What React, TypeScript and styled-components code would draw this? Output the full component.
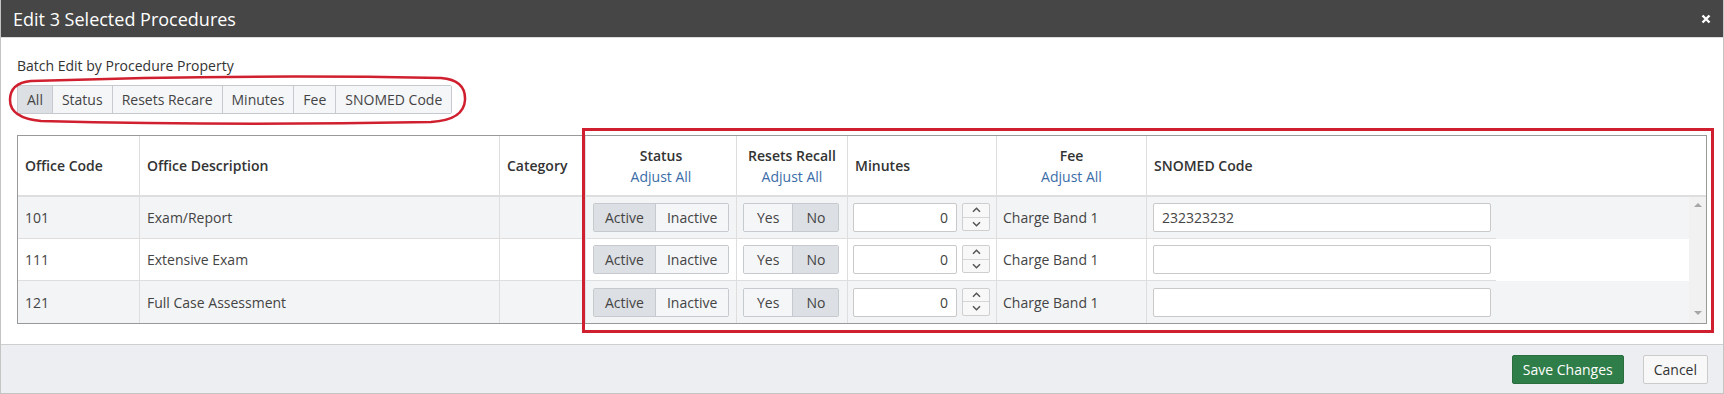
import React from 'react';
import styled, { createGlobalStyle } from 'styled-components';

const GlobalStyle = createGlobalStyle`
	html, body {
		margin: 0;
		padding: 0;
		background: #fff;
	}
	body {
		font-family: 'Open Sans', 'Noto Sans', Arial, sans-serif;
		font-size: 14px;
		color: #333;
	}
	* {
		box-sizing: border-box;
	}
`;

const Modal = styled.div`
	width: 1724px;
	height: 394px;
	display: flex;
	flex-direction: column;
	border-left: 1px solid #c4c4c4;
	border-right: 1px solid #c4c4c4;
	border-bottom: 1px solid #c4c4c4;
`;

const Header = styled.div`
	height: 38px;
	flex: none;
	background: #464646;
	border-bottom: 1px solid #dcdcdc;
	display: flex;
	align-items: center;
	justify-content: space-between;
	padding: 0 12px 0 12px;
	color: #fff;
`;

const Title = styled.h1`
	margin: 0;
	font-size: 18px;
	font-weight: 400;
	line-height: 1;
`;

const Close = styled.button`
	background: none;
	border: 0;
	padding: 0;
	width: 10px;
	height: 10px;
	display: flex;
	cursor: pointer;
`;

const Body = styled.div`
	position: relative;
	flex: 1;
	padding: 18px 16px 0 16px;
`;

const Label = styled.div`
	line-height: 20px;
	color: #333;
`;

const SegGroup = styled.div<{ $top?: number }>`
	display: inline-flex;
	flex: none;
	margin-top: ${({ $top }) => $top ?? 0}px;
	border: 1px solid #c6c9ce;
	border-radius: 2px;
	overflow: hidden;
`;

const SegButton = styled.button<{ $active?: boolean; $pad: number }>`
	height: 27px;
	padding: 0 ${({ $pad }) => $pad}px;
	border: 0;
	border-left: 1px solid #c6c9ce;
	background: ${({ $active }) => ($active ? '#dcdfe3' : '#f5f6f8')};
	color: #444;
	font-family: inherit;
	font-size: 14px;
	line-height: 27px;
	cursor: pointer;

	&:first-child {
		border-left: 0;
	}
`;

const Table = styled.div`
	margin-top: 21px;
	border: 1px solid #999;
`;

const HeadRow = styled.div`
	display: grid;
	grid-template-columns: 121px 360px 86px 151px 111px 149px 150px 1fr;
	height: 61px;
	border-bottom: 2px solid #dedede;
	background: #fff;
`;

const HeadCell = styled.div<{ $center?: boolean }>`
	display: flex;
	flex-direction: column;
	justify-content: center;
	align-items: ${({ $center }) => ($center ? 'center' : 'flex-start')};
	padding: 0 7px;
	border-left: 1px solid #dedede;
	line-height: 21px;

	&:first-child {
		border-left: 0;
	}
`;

const HeadTitle = styled.span`
	font-weight: 600;
	color: #333;
`;

const AdjustLink = styled.a`
	color: #3b6da8;
	text-decoration: none;
	cursor: pointer;
`;

const BodyWrap = styled.div`
	display: flex;
`;

const Rows = styled.div`
	flex: 1;
`;

const Row = styled.div<{ $striped: boolean }>`
	display: grid;
	grid-template-columns: 121px 360px 86px 151px 111px 149px 150px 350px 1fr;
	height: 42px;
	background: ${({ $striped }) => ($striped ? '#f3f4f6' : '#fff')};
`;

const Cell = styled.div<{ $last: boolean; $pad?: number }>`
	display: flex;
	align-items: center;
	gap: 5px;
	padding: 0 ${({ $pad }) => $pad ?? 7}px;
	border-left: 1px solid #dedede;
	border-bottom: ${({ $last }) => ($last ? '0' : '1px solid #dedede')};
	color: #444;

	&:first-child {
		border-left: 0;
	}
`;

const Filler = styled.div``;

const Scrollbar = styled.div`
	width: 17px;
	background: #f1f1f1;
	display: flex;
	flex-direction: column;
	justify-content: space-between;
	align-items: center;
	padding: 6px 0 8px;
`;

const Arrow = styled.span<{ $down?: boolean }>`
	width: 0;
	height: 0;
	border-left: 4px solid transparent;
	border-right: 4px solid transparent;
	${({ $down }) =>
		$down ? 'border-top: 4px solid #a6a6a6;' : 'border-bottom: 4px solid #a6a6a6;'}
`;

const TextInput = styled.input<{ $width: number; $align?: string }>`
	width: ${({ $width }) => $width}px;
	flex: none;
	height: 29px;
	border: 1px solid #c9c9c9;
	border-radius: 2px;
	background: #fff;
	padding: 0 8px;
	font-family: inherit;
	font-size: 14px;
	color: #444;
	text-align: ${({ $align }) => $align ?? 'left'};
	outline: none;
`;

const Spinner = styled.div`
	width: 28px;
	height: 28px;
	flex: none;
	display: flex;
	flex-direction: column;
	border: 1px solid #cfcfcf;
	border-radius: 2px;
	background: #f8f8f8;
	margin-top: -1px;
`;

const SpinHalf = styled.div`
	flex: 1;
	display: flex;
	align-items: center;
	justify-content: center;

	& + & {
		border-top: 1px solid #d6d6d6;
	}
`;

const Footer = styled.div`
	height: 49px;
	flex: none;
	background: #edeef1;
	border-top: 1px solid #cfcfcf;
	display: flex;
	align-items: center;
	justify-content: flex-end;
	gap: 19px;
	padding-right: 15px;
`;

const Button = styled.button<{ $primary?: boolean }>`
	height: 29px;
	padding: 0 10px;
	border-radius: 2px;
	border: 1px solid ${({ $primary }) => ($primary ? '#2a6e3f' : '#cbcbcb')};
	background: ${({ $primary }) => ($primary ? '#2f7d48' : '#f8f8f8')};
	color: ${({ $primary }) => ($primary ? '#fff' : '#333')};
	font-family: inherit;
	font-size: 14px;
	cursor: pointer;
`;

const MarkRect = styled.div`
	position: absolute;
	left: 581px;
	top: 90px;
	width: 1132px;
	height: 205px;
	border: 3px solid #d0202f;
	pointer-events: none;
`;

const MarkLoop = styled.svg`
	position: absolute;
	left: 0;
	top: 0;
	pointer-events: none;
`;

const procedures = [
	{ code: '101', desc: 'Exam/Report', snomed: '232323232' },
	{ code: '111', desc: 'Extensive Exam', snomed: '' },
	{ code: '121', desc: 'Full Case Assessment', snomed: '' },
];

const tabs = ['All', 'Status', 'Resets Recare', 'Minutes', 'Fee', 'SNOMED Code'];

const Chevron: React.FC<{ down?: boolean }> = ({ down }) => (
	<svg width='9' height='6' viewBox='0 0 9 6'>
		<path
			d={down ? 'M1 1.2 L4.5 4.7 L8 1.2' : 'M1 4.8 L4.5 1.3 L8 4.8'}
			fill='none'
			stroke='#555'
			strokeWidth='1.5'
		/>
	</svg>
);

const App: React.FC = () => {
	return (
		<>
			<GlobalStyle />
			<Modal>
				<Header>
					<Title>Edit 3 Selected Procedures</Title>
					<Close aria-label='close'>
						<svg width='10' height='10' viewBox='0 0 10 10'>
							<path d='M1.5 1.5 L8.5 8.5 M8.5 1.5 L1.5 8.5' stroke='#fff' strokeWidth='2.4' />
						</svg>
					</Close>
				</Header>
				<Body>
					<Label>Batch Edit by Procedure Property</Label>
					<SegGroup $top={9}>
						{tabs.map((t, i) => (
							<SegButton key={t} $pad={9} $active={i === 0}>
								{t}
							</SegButton>
						))}
					</SegGroup>
					<Table>
						<HeadRow>
							<HeadCell><HeadTitle>Office Code</HeadTitle></HeadCell>
							<HeadCell><HeadTitle>Office Description</HeadTitle></HeadCell>
							<HeadCell><HeadTitle>Category</HeadTitle></HeadCell>
							<HeadCell $center>
								<HeadTitle>Status</HeadTitle>
								<AdjustLink>Adjust All</AdjustLink>
							</HeadCell>
							<HeadCell $center>
								<HeadTitle>Resets Recall</HeadTitle>
								<AdjustLink>Adjust All</AdjustLink>
							</HeadCell>
							<HeadCell><HeadTitle>Minutes</HeadTitle></HeadCell>
							<HeadCell $center>
								<HeadTitle>Fee</HeadTitle>
								<AdjustLink>Adjust All</AdjustLink>
							</HeadCell>
							<HeadCell><HeadTitle>SNOMED Code</HeadTitle></HeadCell>
						</HeadRow>
						<BodyWrap>
							<Rows>
								{procedures.map((p, i) => {
									const last = i === procedures.length - 1;
									return (
										<Row key={p.code} $striped={i % 2 === 0}>
											<Cell $last={last}>{p.code}</Cell>
											<Cell $last={last}>{p.desc}</Cell>
											<Cell $last={last} />
											<Cell $last={last}>
												<SegGroup>
													<SegButton $pad={11} $active>Active</SegButton>
													<SegButton $pad={11}>Inactive</SegButton>
												</SegGroup>
											</Cell>
											<Cell $last={last} $pad={6}>
												<SegGroup>
													<SegButton $pad={13}>Yes</SegButton>
													<SegButton $pad={13} $active>No</SegButton>
												</SegGroup>
											</Cell>
											<Cell $last={last} $pad={5}>
												<TextInput $width={104} $align='right' defaultValue='0' />
												<Spinner>
													<SpinHalf><Chevron /></SpinHalf>
													<SpinHalf><Chevron down /></SpinHalf>
												</Spinner>
											</Cell>
											<Cell $last={last} $pad={6}>Charge Band 1</Cell>
											<Cell $last={last} $pad={6}>
												<TextInput $width={338} defaultValue={p.snomed} />
											</Cell>
											<Filler />
										</Row>
									);
								})}
							</Rows>
							<Scrollbar>
								<Arrow />
								<Arrow $down />
							</Scrollbar>
						</BodyWrap>
					</Table>
					<MarkRect />
					<MarkLoop width='480' height='100'>
						<path
							d='M30 43 Q 240 36 440 40 Q 465 42 464 62 Q 463 82 430 84 Q 230 88 40 83 Q 9 80 9 62 Q 9 45 30 43 Z'
							fill='none'
							stroke='#d0202f'
							strokeWidth='2.5'
						/>
					</MarkLoop>
				</Body>
				<Footer>
					<Button $primary>Save Changes</Button>
					<Button>Cancel</Button>
				</Footer>
			</Modal>
		</>
	);
};

export default App;
